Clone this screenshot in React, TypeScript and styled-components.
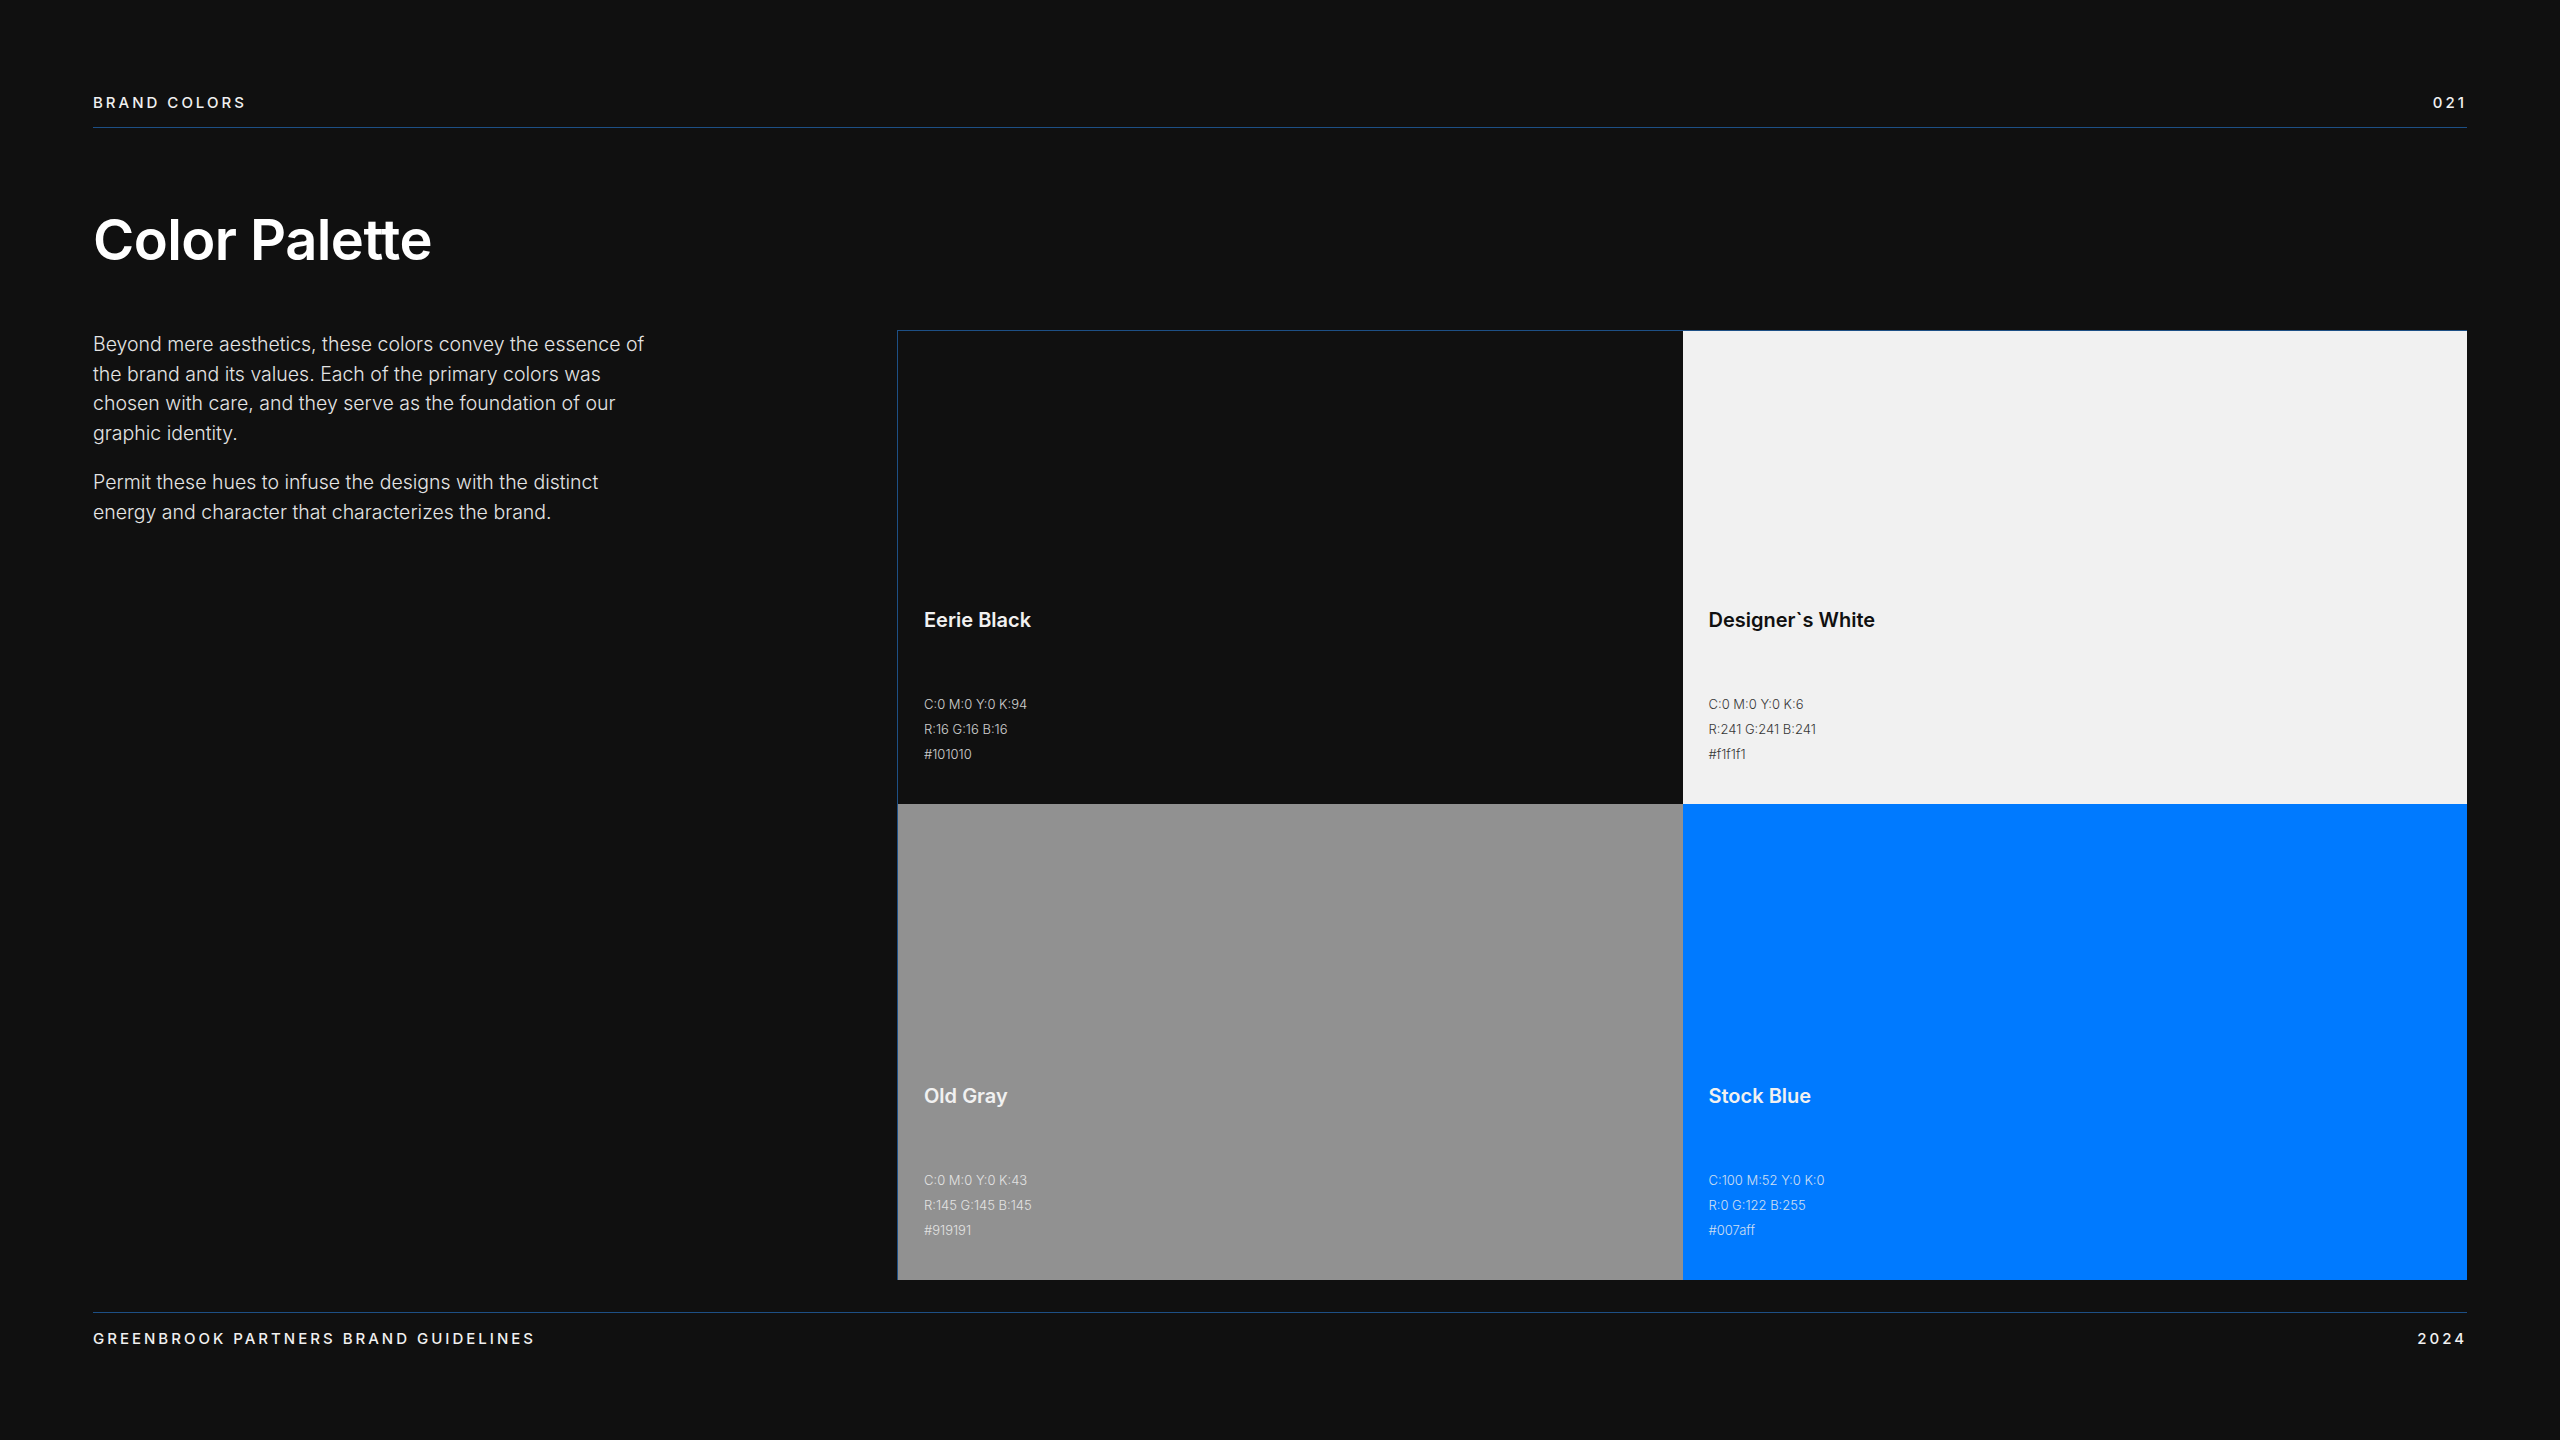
import React from 'react';
import styled, { createGlobalStyle } from 'styled-components';

const Global = createGlobalStyle`
  html, body { margin: 0; padding: 0; background: #101010; }
  body { font-family: Inter, "Noto Sans", sans-serif; color: #f1f1f1; }
`;

const Page = styled.div`
  width: 2560px;
  height: 1440px;
  box-sizing: border-box;
  padding: 94px 93px 0;
  display: flex;
  flex-direction: column;
`;

const Bar = styled.div<{ $top?: boolean }>`
  display: flex;
  justify-content: space-between;
  align-items: center;
  font-size: 15px;
  line-height: 18px;
  font-weight: 500;
  letter-spacing: 0.2em;
  text-transform: uppercase;
  color: #f1f1f1;
  ${(p) => (p.$top
    ? 'padding-bottom: 15px; border-bottom: 1px solid #1d4f85;'
    : 'padding-top: 17px; border-top: 1px solid #1d4f85; margin-top: 32px;')}
`;

const Title = styled.h1`
  margin: 74px 0 51px;
  font-size: 56px;
  line-height: 77px;
  font-weight: 600;
  letter-spacing: -0.01em;
  color: #fff;
`;

const Content = styled.div`
  display: grid;
  grid-template-columns: 804px 1fr;
`;

const Copy = styled.div`
  max-width: 570px;
  p {
    margin: 0 0 20px;
    font-size: 19.5px;
    line-height: 29.5px;
    font-weight: 300;
    color: #e4e4e4;
  }
`;

const Palette = styled.div`
  display: grid;
  grid-template-columns: 1fr 1fr;
  grid-template-rows: 473px 476px;
  border-top: 1px solid #1d4f85;
  border-left: 1px solid #1d4f85;
`;

const Swatch = styled.div<{ $bg: string; $fg: string }>`
  background: ${(p) => p.$bg};
  color: ${(p) => p.$fg};
  display: flex;
  flex-direction: column;
  justify-content: flex-end;
  padding: 0 26px 37px;
`;

const Name = styled.div`
  font-size: 20px;
  line-height: 28px;
  font-weight: 600;
  margin-bottom: 58px;
`;

const Spec = styled.div`
  font-size: 13px;
  line-height: 25px;
  font-weight: 300;
  opacity: 0.85;
`;

const colors = [
  { name: 'Eerie Black', bg: '#101010', fg: '#f1f1f1', cmyk: 'C:0 M:0 Y:0 K:94', rgb: 'R:16 G:16 B:16', hex: '#101010' },
  { name: 'Designer`s White', bg: '#f1f1f1', fg: '#101010', cmyk: 'C:0 M:0 Y:0 K:6', rgb: 'R:241 G:241 B:241', hex: '#f1f1f1' },
  { name: 'Old Gray', bg: '#919191', fg: '#f1f1f1', cmyk: 'C:0 M:0 Y:0 K:43', rgb: 'R:145 G:145 B:145', hex: '#919191' },
  { name: 'Stock Blue', bg: '#007aff', fg: '#f1f1f1', cmyk: 'C:100 M:52 Y:0 K:0', rgb: 'R:0 G:122 B:255', hex: '#007aff' },
];

export default function App() {
  return (
    <Page>
      <Global />
      <Bar $top>
        <span>Brand Colors</span>
        <span>021</span>
      </Bar>
      <Title>Color Palette</Title>
      <Content>
        <Copy>
          <p>
            Beyond mere aesthetics, these colors convey the essence of the brand and its values.
            Each of the primary colors was chosen with care, and they serve as the foundation of
            our graphic identity.
          </p>
          <p>
            Permit these hues to infuse the designs with the distinct energy and character that
            characterizes the brand.
          </p>
        </Copy>
        <Palette>
          {colors.map((c) => (
            <Swatch key={c.name} $bg={c.bg} $fg={c.fg}>
              <Name>{c.name}</Name>
              <Spec>{c.cmyk}</Spec>
              <Spec>{c.rgb}</Spec>
              <Spec>{c.hex}</Spec>
            </Swatch>
          ))}
        </Palette>
      </Content>
      <Bar>
        <span>Greenbrook Partners Brand Guidelines</span>
        <span>2024</span>
      </Bar>
    </Page>
  );
}
